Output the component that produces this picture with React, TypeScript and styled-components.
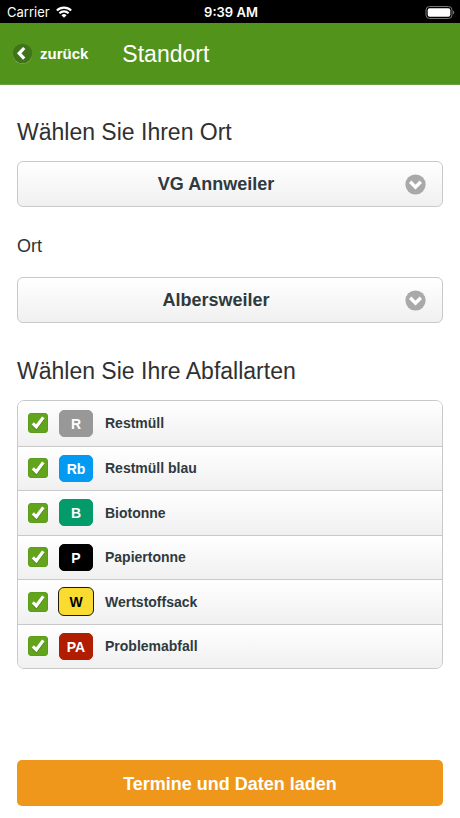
import React from "react";
import styled, { createGlobalStyle } from "styled-components";

const GlobalStyle = createGlobalStyle`
  *, *::before, *::after { box-sizing: border-box; }
  body {
    margin: 0;
    background: #ffffff;
    color: #2f3131;
    font-family: "Liberation Sans", Arial, sans-serif;
  }
`;

const Page = styled.div`
  display: flex;
  flex-direction: column;
  min-height: 100vh;
`;

const StatusBar = styled.div`
  display: grid;
  grid-template-columns: 1fr auto 1fr;
  align-items: center;
  height: 23px;
  padding: 1px 5px 0 7px;
  background: #000000;
  color: #ffffff;
  font-family: Inter, sans-serif;
  font-size: 13px;
  line-height: 16px;
`;

const Carrier = styled.span`
  display: flex;
  align-items: center;
  gap: 6px;
`;

const Clock = styled.time`
  font-weight: 600;
`;

const Battery = styled.svg`
  justify-self: end;
`;

const Header = styled.header`
  display: flex;
  align-items: center;
  gap: 34px;
  height: 62px;
  padding: 0 12px;
  background: #52931b;
  border-bottom: 1px solid #6aa13e;
  color: #ffffff;
`;

const BackButton = styled.button`
  display: flex;
  align-items: center;
  gap: 7px;
  padding: 0;
  border: 0;
  background: none;
  color: inherit;
  font: bold 15px/20px "Liberation Sans", Arial, sans-serif;
  cursor: pointer;
`;

const Title = styled.h1`
  margin: 0;
  font-size: 23px;
  font-weight: 400;
  line-height: 28px;
`;

const Form = styled.form`
  flex: 1;
  display: flex;
  flex-direction: column;
  padding: 33px 17px 12px;
`;

const Heading = styled.h2`
  margin: 0 0 15px;
  font-size: 23px;
  font-weight: 400;
  line-height: 28px;
`;

const FieldLabel = styled.label`
  margin: 28px 0 20px;
  font-size: 18px;
  line-height: 22px;
`;

const SelectBox = styled.div`
  display: grid;
  align-items: center;

  > * { grid-area: 1 / 1; }
  > svg {
    justify-self: end;
    margin-right: 17px;
    pointer-events: none;
  }
`;

const Select = styled.select`
  appearance: none;
  width: 100%;
  height: 46px;
  padding: 0 44px 0 16px;
  border: 1px solid #c9c9c9;
  border-radius: 6px;
  background: linear-gradient(#ffffff, #f0f0f0);
  color: #2f3a3e;
  font: bold 18px/22px "Liberation Sans", Arial, sans-serif;
  text-align: center;
  text-align-last: center;
`;

const WasteGroup = styled.section`
  margin-top: 34px;
`;

const WasteList = styled.ul`
  display: grid;
  grid-auto-rows: 1fr;
  min-height: 269px;
  margin: 0;
  padding: 0;
  overflow: hidden;
  border: 1px solid #c9c9c9;
  border-radius: 7px;
  list-style: none;
`;

const WasteRow = styled.li`
  background: linear-gradient(#ffffff, #f0f0f0);

  & + & { border-top: 1px solid #c9c9c9; }
`;

const WasteLabel = styled.label`
  display: grid;
  grid-template-columns: 20px 36px 1fr;
  align-items: center;
  column-gap: 10px;
  height: 100%;
  padding-left: 10px;
  color: #2f3a3e;
  font-size: 14px;
  font-weight: 700;
  line-height: 20px;
`;

const WasteName = styled.span`
  padding-left: 1px;
`;

const TickBox = styled.span`
  display: grid;

  > * { grid-area: 1 / 1; }
  > svg { visibility: hidden; pointer-events: none; }
  > input:checked + svg { visibility: visible; }
`;

const Checkbox = styled.input`
  appearance: none;
  width: 20px;
  height: 20px;
  margin: 0;
  border: 1px solid #5b9c1c;
  border-radius: 3px;
  background: #ffffff;

  &:checked { background: #62a51c; }
`;

const Badge = styled.span<{ $fill: string; $outlined?: boolean }>`
  justify-self: center;
  width: ${(p) => (p.$outlined ? 36 : 34)}px;
  height: ${(p) => (p.$outlined ? 29 : 27)}px;
  border: 1px solid ${(p) => (p.$outlined ? "#1c1c10" : p.$fill)};
  border-radius: ${(p) => (p.$outlined ? 6 : 5)}px;
  background: ${(p) => p.$fill};
  color: ${(p) => (p.$outlined ? "#000000" : "#ffffff")};
  font-size: 14px;
  line-height: ${(p) => (p.$outlined ? 28 : 26)}px;
  text-align: center;
`;

const SubmitButton = styled.button`
  width: 100%;
  height: 46px;
  margin-top: auto;
  padding: 2px 16px 0;
  border: 0;
  border-radius: 5px;
  background: #ee971b;
  color: #ffffff;
  font: bold 18px/22px "Liberation Sans", Arial, sans-serif;
  cursor: pointer;
`;

function WifiIcon() {
  return (
    <svg width="16" height="12" viewBox="0 0 15 11" aria-hidden="true" fill="none" stroke="#fff" strokeWidth="2">
      <path d="M0.8 4.1a9.6 9.6 0 0 1 13.4 0" />
      <path d="M3.2 6.7a6.2 6.2 0 0 1 8.6 0" />
      <path d="M7.5 10.9 5.1 8.5a3.5 3.5 0 0 1 4.8 0Z" fill="#fff" stroke="none" />
    </svg>
  );
}

function BatteryIcon() {
  return (
    <Battery width="30" height="13" viewBox="0 0 30 13" aria-hidden="true">
      <rect x="1" y="0.5" width="26" height="12" rx="3.5" fill="none" stroke="#777" />
      <rect x="2.7" y="2.2" width="22.6" height="8.6" rx="2" fill="#fff" />
      <path d="M28.2 4.5c1.4.5 1.4 3.5 0 4Z" fill="#888" />
    </Battery>
  );
}

function BackIcon() {
  return (
    <svg width="21" height="22" viewBox="0 0 21 22" aria-hidden="true">
      <circle cx="10.5" cy="11.3" r="9.8" fill="#86b35e" />
      <circle cx="10.5" cy="10.5" r="9.8" fill="#407419" />
      <path d="m12.2 5-5 5.3 5 5.3" fill="none" stroke="#fff" strokeWidth="3.2" />
    </svg>
  );
}

function ArrowIcon() {
  return (
    <svg width="21" height="21" viewBox="0 0 21 21" aria-hidden="true">
      <circle cx="10.5" cy="10.5" r="10.1" fill="#a9a9a9" />
      <path d="m5.2 7.8 5.3 5.3 5.3-5.3" fill="none" stroke="#fff" strokeWidth="3.4" />
    </svg>
  );
}

function TickIcon() {
  return (
    <svg width="20" height="20" viewBox="0 0 20 20" aria-hidden="true" fill="none" strokeWidth="3.2">
      <path d="m4.8 11.6 3.5 3.4 7-9.4" stroke="#3d6c10" strokeOpacity="0.6" />
      <path d="m4.8 10.4 3.5 3.4 7-9.4" stroke="#fff" />
    </svg>
  );
}

type SelectFieldProps = { id: string; label?: string; options: string[] };

function SelectField({ id, label, options }: SelectFieldProps) {
  return (
    <SelectBox>
      <Select id={id} aria-label={label}>
        {options.map((option) => (
          <option key={option}>{option}</option>
        ))}
      </Select>
      <ArrowIcon />
    </SelectBox>
  );
}

const wasteTypes = [
  { code: "R", name: "Restmüll", fill: "#989898" },
  { code: "Rb", name: "Restmüll blau", fill: "#039bf2" },
  { code: "B", name: "Biotonne", fill: "#029b69" },
  { code: "P", name: "Papiertonne", fill: "#000000" },
  { code: "W", name: "Wertstoffsack", fill: "#fadb30", outlined: true },
  { code: "PA", name: "Problemabfall", fill: "#b01d00" },
];

export default function App() {
  return (
    <Page>
      <GlobalStyle />
      <StatusBar>
        <Carrier>
          Carrier
          <WifiIcon />
        </Carrier>
        <Clock>9:39 AM</Clock>
        <BatteryIcon />
      </StatusBar>
      <Header>
        <BackButton type="button">
          <BackIcon />
          zurück
        </BackButton>
        <Title>Standort</Title>
      </Header>
      <Form onSubmit={(event) => event.preventDefault()}>
        <Heading>Wählen Sie Ihren Ort</Heading>
        <SelectField id="region" label="Wählen Sie Ihren Ort" options={["VG Annweiler"]} />
        <FieldLabel htmlFor="town">Ort</FieldLabel>
        <SelectField id="town" options={["Albersweiler"]} />
        <WasteGroup aria-labelledby="waste-heading">
          <Heading id="waste-heading">Wählen Sie Ihre Abfallarten</Heading>
          <WasteList>
            {wasteTypes.map(({ code, name, fill, outlined }) => (
              <WasteRow key={code}>
                <WasteLabel>
                  <TickBox>
                    <Checkbox type="checkbox" defaultChecked />
                    <TickIcon />
                  </TickBox>
                  <Badge $fill={fill} $outlined={outlined}>{code}</Badge>
                  <WasteName>{name}</WasteName>
                </WasteLabel>
              </WasteRow>
            ))}
          </WasteList>
        </WasteGroup>
        <SubmitButton type="submit">Termine und Daten laden</SubmitButton>
      </Form>
    </Page>
  );
}
